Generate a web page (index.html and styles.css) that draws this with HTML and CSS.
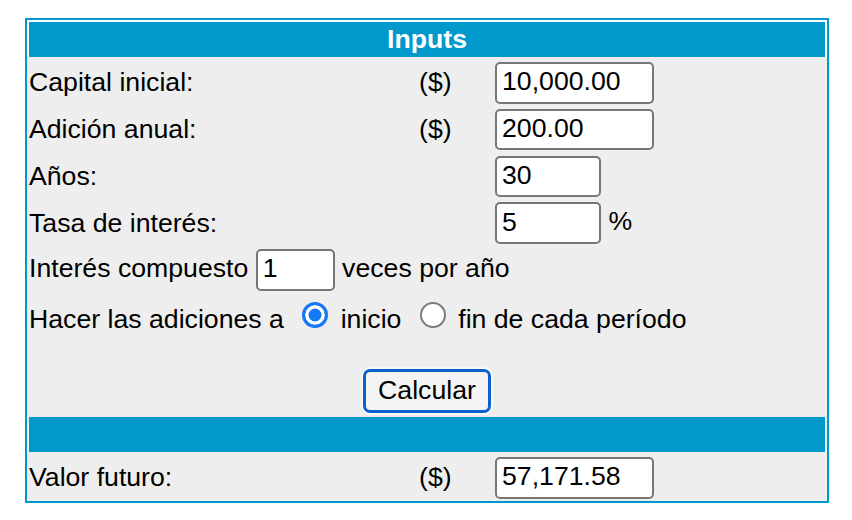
FILE: index.html
```html
<!DOCTYPE html>
<html lang="es">
<head>
	<title>Calculadora de interés compuesto</title>
	<meta charset="utf-8">
	<meta name="viewport" content="width=device-width, initial-scale=1">

	<link rel="stylesheet" href="styles.css">
</head>

<body>
	<form class="calc" onsubmit="return false;">
		<div class="bar bar-head">Inputs</div>

		<div class="row">
			<span class="label">Capital inicial:</span>
			<span class="unit">($)</span>
			<span class="field"><input type="text" class="wide" value="10,000.00"></span>
		</div>
		<div class="row">
			<span class="label">Adición anual:</span>
			<span class="unit">($)</span>
			<span class="field"><input type="text" class="wide" value="200.00"></span>
		</div>
		<div class="row">
			<span class="label">Años:</span>
			<span class="unit"></span>
			<span class="field"><input type="text" class="narrow" value="30"></span>
		</div>
		<div class="row">
			<span class="label">Tasa de interés:</span>
			<span class="unit"></span>
			<span class="field"><input type="text" class="narrow" value="5"> %</span>
		</div>
		<div class="row-inline">
			Interés compuesto <input type="text" class="tiny" value="1"> veces por año
		</div>
		<div class="row-radio">
			Hacer las adiciones a <input type="radio" name="when" checked> inicio <input type="radio" name="when"> fin de cada período
		</div>

		<div class="actions">
			<button type="button">Calcular</button>
		</div>

		<div class="bar"></div>

		<div class="row">
			<span class="label">Valor futuro:</span>
			<span class="unit">($)</span>
			<span class="field"><input type="text" class="wide" value="57,171.58" readonly></span>
		</div>
	</form>
</body>

</html>
```

FILE: styles.css
```css
body {
	margin: 0;
	padding: 0;
	background: #fff;
	font-family: "Liberation Sans", Arial, sans-serif;
	font-size: 26.67px;
	color: #000;
}
.calc {
	display: block;
	width: 800px;
	margin: 18px 0 0 25px;
	padding: 0 0 2px;
	border: 2px solid #0099cc;
	background: #eee;
}
.bar {
	height: 35px;
	margin: 0 2px;
	background: #0099cc;
	color: #fff;
	font-weight: bold;
	text-align: center;
	line-height: 35px;
}
.bar-head {
	margin: 0;
	border: 2px solid #fff;
	border-bottom: 0;
}
.row {
	display: grid;
	grid-template-columns: 390px 76px auto;
	align-items: center;
	height: 46.8px;
	padding: 5px 0 0 2px;
	box-sizing: border-box;
}
.row-inline {
	height: 46.8px;
	padding: 5px 0 0 2px;
	box-sizing: border-box;
}
.row-radio {
	height: 47px;
	padding: 5px 0 0 2px;
	box-sizing: border-box;
}
input[type="text"] {
	height: 41.6px;
	margin: 0;
	padding: 0 5px 2px;
	box-sizing: border-box;
	border: 2px solid #777;
	border-radius: 5px;
	background: #fff;
	font: inherit;
	color: #000;
	vertical-align: baseline;
}
input.wide {
	width: 159px;
}
input.narrow {
	width: 106px;
}
input.tiny {
	width: 79px;
}
input[type="radio"] {
	appearance: none;
	-webkit-appearance: none;
	display: inline-block;
	width: 26px;
	height: 26px;
	margin: 6px 5px 0 11px;
	box-sizing: border-box;
	border: 2px solid #7c7c7c;
	border-radius: 50%;
	background: #fff;
	vertical-align: baseline;
}
input[type="radio"]:checked {
	border: 3px solid #1579f6;
	background: #1579f6;
	box-shadow: inset 0 0 0 3.5px #fff;
}
.actions {
	display: flex;
	justify-content: center;
	padding: 31px 0 4px;
}
.actions button {
	width: 128px;
	height: 44px;
	margin: 0;
	padding: 0;
	border: 3px solid #0a62cf;
	border-radius: 7px;
	background: #f4f4f4;
	box-shadow: 0 0 0 1.5px #fff;
	font: inherit;
	color: #000;
	cursor: pointer;
}
```
